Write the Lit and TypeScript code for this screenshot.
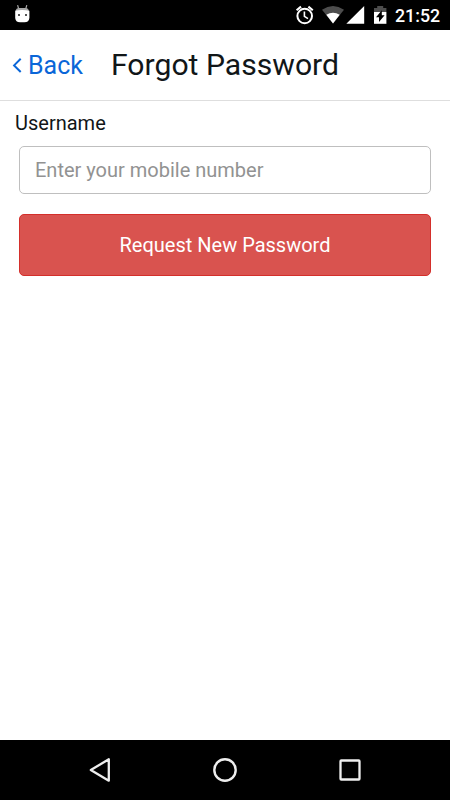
import { LitElement, html, css } from "lit";
import { customElement } from "lit/decorators.js";

@customElement("status-bar")
class StatusBar extends LitElement {
  static styles = css`
    :host { display: flex; justify-content: space-between; height: 30px; background: #000; color: #fff; }
    svg { display: block; flex: none; }
    .right { display: flex; }
    .clock { width: 55px; font-size: 17.8px; font-weight: 500; line-height: 32px; white-space: nowrap; }
  `;
  render() {
    return html`
      <svg width="40" height="30" viewBox="0 0 40 30">
        <path d="M17.6 5.2L18.6 8.6M26.8 5.2L25.8 8.6" stroke="#aaa" stroke-width="1.2" fill="none" />
        <path d="M15.6 11Q16 8 19 8H25.5Q28.5 8 28.9 11Z" fill="#a8a8a8" />
        <path d="M15.2 10.8Q22.2 9.4 29.4 10.8V18Q29 22.2 24.5 22.2H20Q15.5 22.2 15.2 18Z" fill="#fff" />
        <path d="M18 14h2v2h-2zM25 14h2v2h-2z" fill="#555" />
      </svg>
      <div class="right">
        <svg width="100" height="30" viewBox="0 0 100 30">
          <g fill="none" stroke="#fff">
            <circle cx="9.7" cy="16" r="7.3" stroke-width="2" />
            <path d="M9.4 11.5V16.3L13 18.6" stroke-width="1.6" />
            <path d="M1.6 10.2L6 6.6M13.4 6.6L17.8 10.2" stroke-width="2.1" />
          </g>
          <path d="M27 9.7Q38 2.3 49 9.7L38 23.5Z" fill="#4d4d4d" />
          <path d="M31.3 14.8Q38 10.7 44.7 14.8L38 23.5Z" fill="#fff" />
          <path d="M69.2 6V23.7H51.3Z" fill="#fff" />
          <path d="M79 8H82.2V6H88.2V8H91.4V12H79Z" fill="#4d4d4d" />
          <path d="M79 12H91.4V23.8H79Z" fill="#fff" />
          <path d="M86.8 10.3L81 17.2H84V22L89.6 15.2H86.8Z" fill="#000" />
        </svg>
        <span class="clock">21:52</span>
      </div>
    `;
  }
}

@customElement("nav-bar")
class NavBar extends LitElement {
  static styles = css`
    :host { display: flex; align-items: center; justify-content: space-around; height: 60px; background: #000; padding: 0 37px; }
    svg { display: block; fill: none; stroke: #eee; }
  `;
  render() {
    return html`
      <svg width="26" height="26" viewBox="0 0 26 26"><path d="M21.8 2.3V23.7L3.8 13Z" stroke-width="2.3" stroke-linejoin="round" /></svg>
      <svg width="26" height="26" viewBox="0 0 26 26"><circle cx="13" cy="13" r="10.7" stroke-width="2.4" /></svg>
      <svg width="26" height="26" viewBox="0 0 26 26"><rect x="3.5" y="3.5" width="19" height="19" rx="0.8" stroke-width="2.3" /></svg>
    `;
  }
}

@customElement("app-root")
class AppRoot extends LitElement {
  static styles = css`
    :host { display: flex; flex-direction: column; height: 800px; background: #fff; font-family: Roboto, "Liberation Sans", sans-serif; color: #111618; }
    header { display: flex; align-items: center; box-sizing: border-box; height: 71px; border-bottom: 1px solid #dedede; padding-left: 12px; }
    .back { display: flex; align-items: center; width: 99px; padding-top: 1px; color: #0a66d8; font-size: 25px; line-height: 30px; white-space: nowrap; }
    .back svg { display: block; flex: none; }
    h1 { margin: 0; font-size: 30.15px; font-weight: 400; line-height: 36px; white-space: nowrap; }
    main { flex: 1; display: flex; flex-direction: column; padding: 9px 19px 0; }
    label { margin-left: -4px; font-size: 20px; line-height: 26px; }
    input { box-sizing: border-box; width: 100%; height: 48px; margin: 10px 0 20px; padding: 0 15px; border: 1px solid #bfbfbf; border-radius: 5px; background: #fff; font: 20px Roboto, "Liberation Sans", sans-serif; outline: none; }
    input::placeholder { color: #929292; opacity: 1; }
    button { box-sizing: border-box; width: 100%; height: 62px; padding: 0; border: 1px solid #d42f2b; border-radius: 5px; background: #d9534f; color: #fff; font: 20px Roboto, "Liberation Sans", sans-serif; }
  `;
  render() {
    return html`
      <status-bar></status-bar>
      <header>
        <div class="back">
          <svg width="16" height="30" viewBox="0 0 16 30"><path d="M8.7 7.8L2.1 14.4L8.7 21" fill="none" stroke="#0a66d8" stroke-width="2" /></svg>
          <span>Back</span>
        </div>
        <h1>Forgot Password</h1>
      </header>
      <main>
        <label for="user">Username</label>
        <input id="user" type="text" placeholder="Enter your mobile number" />
        <button type="button">Request New Password</button>
      </main>
      <nav-bar></nav-bar>
    `;
  }
}
